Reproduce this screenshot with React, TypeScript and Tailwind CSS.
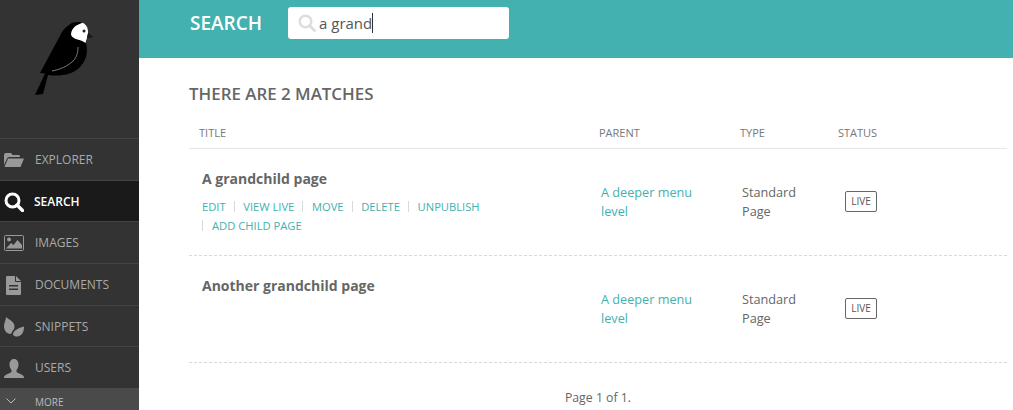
import React from "react";

const Bird = () => (
  <svg width="70" height="80" viewBox="30 20 70 80" className="block">
    <path d="M35 95 L43 94 L48 75 C56 76 63 75.500 68 74 C76 72 83 66 86 57 C87.500 52 87 47 86 43 L87 38 L93 37 L88 33 C88.500 28 86 24 82 22.500 C77 21.500 72 22 69 25 C66 27 64 29 62 32 L40 73 L45 73.500 Z" fill="#000" />
    <path d="M82.500 22.800 C86 24 88.500 28 88 33 L87 38 L85.500 43 C83 41 80 40 77.500 39.500 C74 38.500 71.500 37 71 34.500 C71 31 73 28 75.500 26 C78 24.500 80 24 82.500 22.800 Z" fill="#fff" />
    <circle cx="84" cy="31" r="1.500" fill="#222" />
    <path d="M88 33.500 L93 37 L87 38 Z" fill="#1c1c1c" />
    <path d="M78 47 C78 52 77 57 73 61 C68 66 60 69.500 52 71" fill="none" stroke="#aaa" strokeWidth="0.700" />
  </svg>
);

const icons: Record<string, React.ReactNode> = {
  folder: (
    <svg width="20" height="16" viewBox="0 0 20 16">
      <path d="M0 3 Q0 1 2 1 H7 L8.500 3 H15 Q16 3 16 5 H5 Q3.500 5 3 6.500 L0 13 Z" fill="currentColor" />
      <path d="M4 6.500 H20 L16.500 15 H0.500 Z" fill="currentColor" />
    </svg>
  ),
  search: (
    <svg width="20" height="20" viewBox="0 0 20 20">
      <circle cx="8.500" cy="8.500" r="6.500" fill="none" stroke="currentColor" strokeWidth="3" />
      <path d="M13 13 L18.500 18.500" stroke="currentColor" strokeWidth="3.400" strokeLinecap="round" />
    </svg>
  ),
  image: (
    <svg width="20" height="16" viewBox="0 0 20 16">
      <rect x="0.500" y="0.500" width="19" height="15" rx="1" fill="none" stroke="currentColor" />
      <circle cx="5" cy="4.500" r="2" fill="currentColor" />
      <path d="M2 13.500 L7 8 L9.500 10 L13.500 5 L18 10 V13.500 Z" fill="currentColor" />
    </svg>
  ),
  doc: (
    <svg width="15" height="19" viewBox="0 0 15 19">
      <path d="M0 1 Q0 0 1 0 H9 V5 Q9 6 10 6 H15 V18 Q15 19 14 19 H1 Q0 19 0 18 Z M10 0 L15 5 H10 Z M3 9 V10.500 H12 V9 Z M3 12.500 V14 H12 V12.500 Z" fill="currentColor" fillRule="evenodd" />
    </svg>
  ),
  leaf: (
    <svg width="20" height="20" viewBox="0 0 20 20">
      <path d="M2 0 C5 3 10 4 10.500 9 C10.700 11 10 12.500 8.500 14 C8 15 7.500 16 7 17 C3 17 0 14 0 9 C0 6 2 3 2 0 Z" fill="currentColor" />
      <path d="M20 9.500 C20 14 18.500 19 13.500 19.500 C11.500 19.700 10 19 9 18 C9 14 13 11.500 20 9.500 Z" fill="currentColor" />
    </svg>
  ),
  user: (
    <svg width="20" height="19" viewBox="0 0 20 19">
      <path d="M10 0 C13 0 14.500 2.500 14.500 5.500 C14.500 8 13.500 10 12.500 11 V13 C14 14.500 19 15 20 18 V19 H0 V18 C1 15 6 14.500 7.500 13 V11 C6.500 10 5.500 8 5.500 5.500 C5.500 2.500 7 0 10 0 Z" fill="currentColor" />
    </svg>
  ),
};

const navItems = [
  { label: "EXPLORER", icon: "folder" },
  { label: "SEARCH", icon: "search", active: true },
  { label: "IMAGES", icon: "image" },
  { label: "DOCUMENTS", icon: "doc" },
  { label: "SNIPPETS", icon: "leaf" },
  { label: "USERS", icon: "user" },
];

const actions = ["VIEW LIVE", "MOVE", "DELETE", "UNPUBLISH"];

const Row = ({ title, withActions }: { title: string; withActions?: boolean }) => (
  <div className="flex h-[107px] border-b border-dashed border-[#d9d9d9]">
    <div className="w-[410px] pl-[13px] pt-[20px]">
      <div className="text-[14px] leading-[20px] font-bold text-[#666]">{title}</div>
      {withActions && (
        <div className="mt-[8px] w-[300px] text-[11.2px] leading-[19px] text-[#43b1b0]">
          <div className="flex items-center">
            <span>EDIT</span>
            {actions.map((a) => (
              <span key={a} className="flex items-center">
                <span className="ml-[8px] mr-[8.6px] h-[11px] w-px bg-[#d9d9d9]" />
                <span>{a}</span>
              </span>
            ))}
          </div>
          <div className="flex items-center">
            <span className="mr-[9px] h-[11px] w-px bg-[#d9d9d9]" />
            <span>ADD CHILD PAGE</span>
          </div>
        </div>
      )}
    </div>
    <div className="w-[141px] pl-[2px] pt-[34px] pr-[20px] text-[12.7px] leading-[19px] text-[#43b1b0]">A deeper menu level</div>
    <div className="w-[98px] pl-[2px] pt-[34px] pr-[20px] text-[12.7px] leading-[19px] text-[#666]">Standard Page</div>
    <div className="pl-[7px] pt-[42px]">
      <span className="flex h-[21px] w-[32px] items-center justify-center rounded-[2px] border border-[#666] text-[10px] font-medium text-[#555]">LIVE</span>
    </div>
  </div>
);

export default function App() {
  return (
    <div className="flex h-[410px] w-[1013px] overflow-hidden bg-white font-['Open_Sans',sans-serif]">
      <aside className="flex w-[139px] shrink-0 flex-col bg-[#333]">
        <div className="h-[138px] shrink-0 pt-[20px] pl-[30px]">
          <Bird />
        </div>
        <nav className="flex flex-col">
          {navItems.map((n) => (
            <div
              key={n.label}
              className={
                n.active
                  ? "flex h-[41.67px] items-center border-t border-[#444] bg-[#1a1a1a] pt-[1.6px] text-white"
                  : "flex h-[41.67px] items-center border-t border-[#444] pt-[1.6px] text-[#aaa]"
              }
            >
              <span className={n.active ? "flex w-[34px] justify-center pr-[7px] text-white" : "flex w-[34px] justify-center pr-[7px] text-[#999]"}>
                {icons[n.icon]}
              </span>
              <span className={n.active ? "text-[12px] font-semibold" : "ml-[1px] text-[12px]"}>{n.label}</span>
            </div>
          ))}
        </nav>
        <div className="flex h-[22px] items-start bg-[#4a4a4a] pt-[6px] text-[#bbb]">
          <svg width="10" height="6" viewBox="0 0 10 6" className="ml-[6px] mt-[4px]">
            <path d="M0.500 0.500 L5 5 L9.500 0.500" fill="none" stroke="currentColor" strokeWidth="1" />
          </svg>
          <span className="ml-[19px] text-[10px] leading-[16px]">MORE</span>
        </div>
      </aside>
      <main className="flex min-w-0 flex-1 flex-col">
        <header className="flex h-[58px] shrink-0 items-start bg-[#43b1b0] pl-[51px] pt-[7px]">
          <h1 className="w-[98px] pt-[3px] text-[19px] leading-[27px] font-semibold text-white">SEARCH</h1>
          <div className="flex h-[32px] w-[221px] items-center rounded-[3px] bg-white pl-[10px]">
            <svg width="18" height="18" viewBox="0 0 18 18">
              <circle cx="7.500" cy="7.500" r="5.800" fill="none" stroke="#ddd" strokeWidth="2.400" />
              <path d="M11.500 11.500 L16.500 16.500" stroke="#ddd" strokeWidth="2.800" strokeLinecap="round" />
            </svg>
            <span className="ml-[3px] text-[15px] leading-[20px] text-[#555]">a grand</span>
            <span className="h-[20px] w-px bg-[#333]" />
          </div>
        </header>
        <section className="flex-1 pl-[50px] pr-[6px]">
          <h2 className="pt-[25px] text-[16.9px] leading-[22px] font-semibold text-[#666]">THERE ARE 2 MATCHES</h2>
          <div className="mt-[20px] flex h-[24px] items-start border-b border-[#e6e6e6] text-[11px] leading-[16px] text-[#777]">
            <div className="w-[410px] pl-[10px]">TITLE</div>
            <div className="w-[141px]">PARENT</div>
            <div className="w-[98px]">TYPE</div>
            <div>STATUS</div>
          </div>
          <Row title="A grandchild page" withActions />
          <Row title="Another grandchild page" />
          <div className="pt-[26px] text-center text-[12.3px] leading-[18px] text-[#666]">Page 1 of 1.</div>
        </section>
      </main>
    </div>
  );
}
